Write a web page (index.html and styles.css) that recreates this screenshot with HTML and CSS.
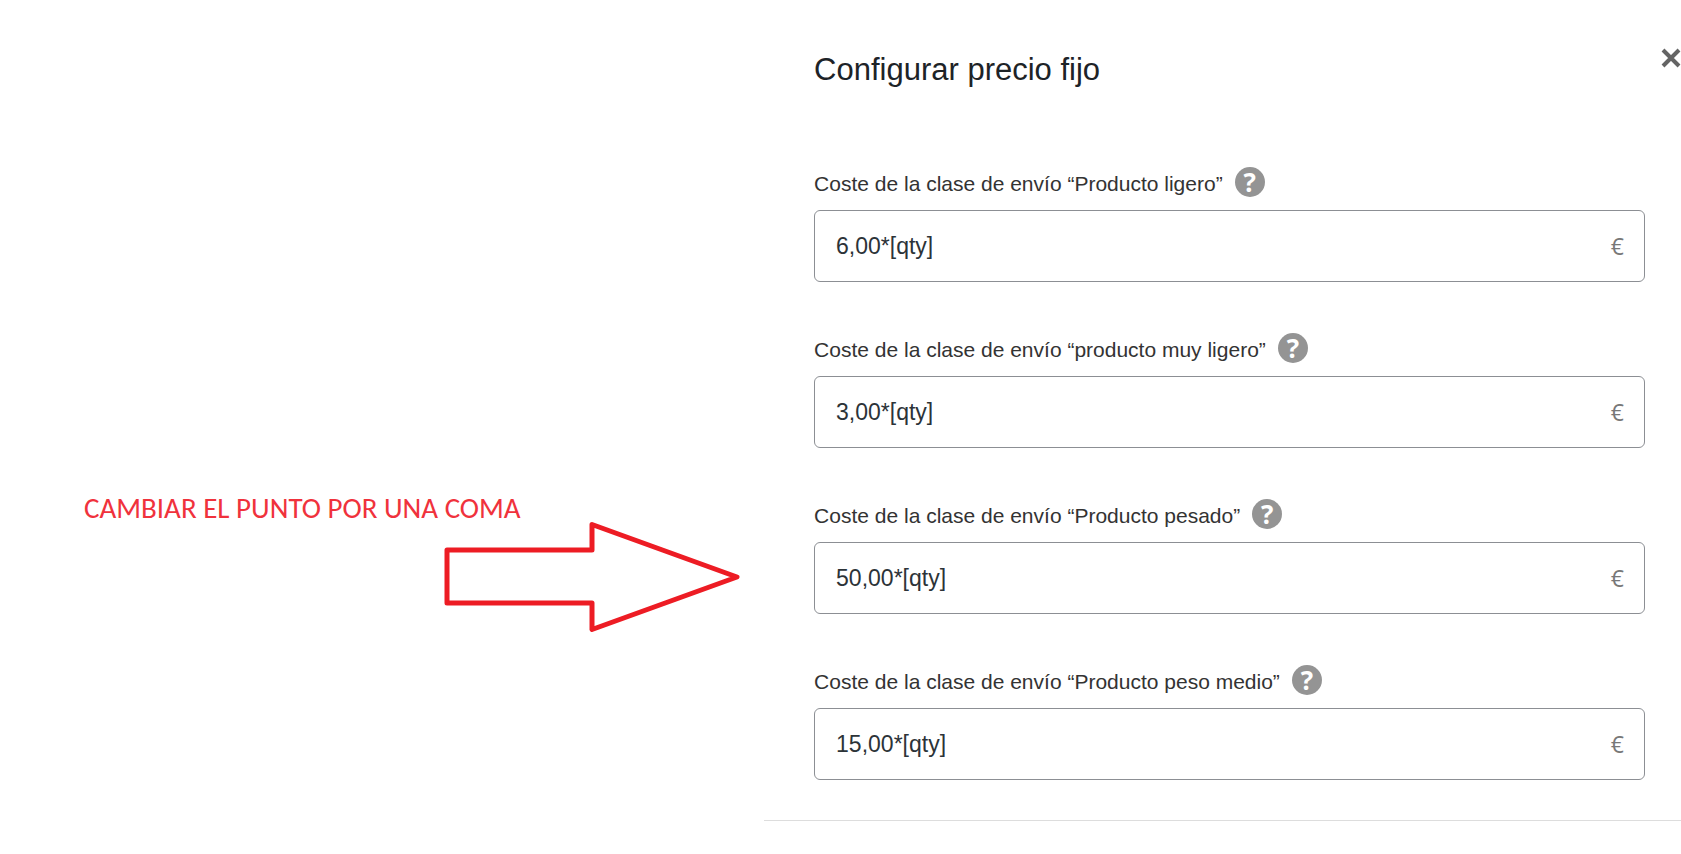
FILE: index.html
```html
<!DOCTYPE html>
<html lang="es">
<head>
  <meta charset="UTF-8">
  <meta name="viewport" content="width=device-width, initial-scale=1.0">
  <title>Configurar precio fijo</title>
  <link rel="stylesheet" href="styles.css">
</head>
<body>
  <div class="page">
    <aside class="note">
      <p class="note-text">CAMBIAR EL PUNTO POR UNA COMA</p>
      <svg class="note-arrow" viewBox="0 0 296 110" aria-hidden="true">
        <path d="M3 28H148V2.500L293 55L148 107.500V81H3Z"/>
      </svg>
    </aside>

    <main class="modal">
      <header class="modal-header">
        <h1>Configurar precio fijo</h1>
        <button type="button" class="close" aria-label="Cerrar">
          <svg viewBox="0 0 20 20"><path d="M2 2L18 18M18 2L2 18"/></svg>
        </button>
      </header>

      <form class="fields">
        <div class="field">
          <div class="field-label">
            <label for="ligero">Coste de la clase de envío “Producto ligero”</label>
            <span class="help">?</span>
          </div>
          <div class="field-box">
            <input type="text" id="ligero" value="6,00*[qty]">
            <span class="currency">€</span>
          </div>
        </div>

        <div class="field">
          <div class="field-label">
            <label for="muy-ligero">Coste de la clase de envío “producto muy ligero”</label>
            <span class="help">?</span>
          </div>
          <div class="field-box">
            <input type="text" id="muy-ligero" value="3,00*[qty]">
            <span class="currency">€</span>
          </div>
        </div>

        <div class="field">
          <div class="field-label">
            <label for="pesado">Coste de la clase de envío “Producto pesado”</label>
            <span class="help">?</span>
          </div>
          <div class="field-box">
            <input type="text" id="pesado" value="50,00*[qty]">
            <span class="currency">€</span>
          </div>
        </div>

        <div class="field">
          <div class="field-label">
            <label for="medio">Coste de la clase de envío “Producto peso medio”</label>
            <span class="help">?</span>
          </div>
          <div class="field-box">
            <input type="text" id="medio" value="15,00*[qty]">
            <span class="currency">€</span>
          </div>
        </div>
      </form>
    </main>
  </div>
</body>
</html>
```

FILE: styles.css
```css
* {
  box-sizing: border-box;
}
body {
  margin: 0;
  background: #fff;
  font-family: "Liberation Sans", Arial, sans-serif;
}
.page {
  display: grid;
  grid-template-columns: 5fr 6fr;
  align-items: start;
}

/* red annotation */
.note {
  display: flex;
  flex-direction: column;
  padding: 494px 24px 0 84px;
}
.note-text {
  margin: 0;
  color: #f0323c;
  font-family: Carlito, Lato, sans-serif;
  font-size: 29px;
  line-height: 28px;
  white-space: nowrap;
}
.note-arrow {
  width: 296px;
  height: 110px;
  align-self: flex-end;
}
.note-arrow path {
  fill: none;
  stroke: #ed1c24;
  stroke-width: 5;
  stroke-linejoin: round;
}

/* modal */
.modal {
  border-bottom: 1px solid #ddd;
}
.modal-header {
  display: flex;
  justify-content: space-between;
  align-items: flex-start;
  padding: 48px 0 0 50px;
}
h1 {
  margin: 0;
  color: #1d2327;
  font-size: 31px;
  font-weight: 400;
  line-height: 44px;
}
.close {
  width: 20px;
  height: 20px;
  padding: 0;
  border: 0;
  background: none;
  cursor: pointer;
}
.close svg {
  display: block;
}
.close path {
  stroke: #646464;
  stroke-width: 4;
}
.fields {
  display: flex;
  flex-direction: column;
  gap: 51px;
  padding: 75px 36px 40px 50px;
}
.field {
  display: flex;
  flex-direction: column;
  gap: 13px;
}
.field-label {
  display: flex;
  align-items: center;
  gap: 12px;
  height: 30px;
  color: #333;
  font-size: 21px;
  line-height: 30px;
}
.field-label label {
  padding-top: 3px;
}
.help {
  width: 30px;
  height: 30px;
  border-radius: 50%;
  background: #949494;
  color: #fff;
  font-family: "Open Sans", sans-serif;
  font-size: 26px;
  font-weight: 700;
  text-align: center;
}
.field-box {
  display: flex;
  align-items: center;
  height: 72px;
  padding: 0 20px 0 21px;
  border: 1px solid #8c8f94;
  border-radius: 6px;
}
.field-box input {
  flex: 1;
  min-width: 0;
  padding: 0;
  border: 0;
  outline: 0;
  background: none;
  color: #2c3338;
  font-family: inherit;
  font-size: 23px;
}
.currency {
  color: #787878;
  font-family: "Open Sans", sans-serif;
  font-size: 23px;
  line-height: 30px;
}
```
